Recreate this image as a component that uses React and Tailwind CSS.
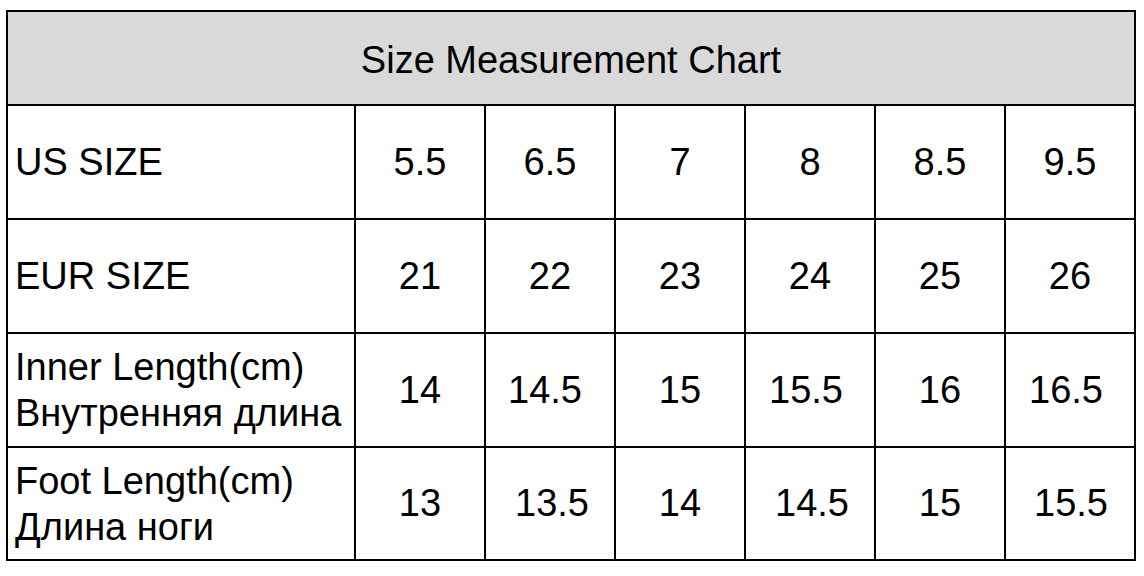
const rows = [
  { label: ['US SIZE'], values: ['5.5', '6.5', '7', '8', '8.5', '9.5'] },
  { label: ['EUR SIZE'], values: ['21', '22', '23', '24', '25', '26'] },
  {
    label: ['Inner Length(cm)', 'Внутренняя длина'],
    values: ['14', '14.5', '15', '15.5', '16', '16.5'],
    shift: ['', 'pr-[10px]', '', 'pr-[8px]', '', 'pr-[8px]'],
  },
  {
    label: ['Foot Length(cm)', 'Длина ноги'],
    values: ['13', '13.5', '14', '14.5', '15', '15.5'],
    shift: ['', 'pl-[4px]', '', 'pl-[4px]', '', 'pl-[2px]'],
  },
]

export default function App() {
  return (
    <div className="w-[1144px] h-[576px] bg-white pt-[10px] pl-[6px] text-black font-['Liberation_Sans',Arial,sans-serif]">
      <div className="w-[1130px] border-2 border-black">
        <div className="h-[94px] bg-[#d9d9d9] border-b-2 border-black flex items-center justify-center pt-[4px] text-[38px]">
          Size Measurement Chart
        </div>

        {rows.map((row, i) => (
          <div
            key={i}
            className={`flex ${i < rows.length - 1 ? 'h-[114px] border-b-2 border-black' : 'h-[111px]'}`}
          >
            <div className="w-[348px] border-r-2 border-black flex flex-col justify-center pl-[7px] text-[38px] leading-[46px]">
              {row.label.map((line) => (
                <div key={line}>{line}</div>
              ))}
            </div>
            {row.values.map((v, j) => (
              <div
                key={j}
                className={`flex items-center justify-center text-[38px] ${row.shift ? row.shift[j] : ''} ${j < 5 ? 'w-[130px] border-r-2 border-black' : 'w-[128px]'}`}
              >
                {v}
              </div>
            ))}
          </div>
        ))}
      </div>
    </div>
  )
}
